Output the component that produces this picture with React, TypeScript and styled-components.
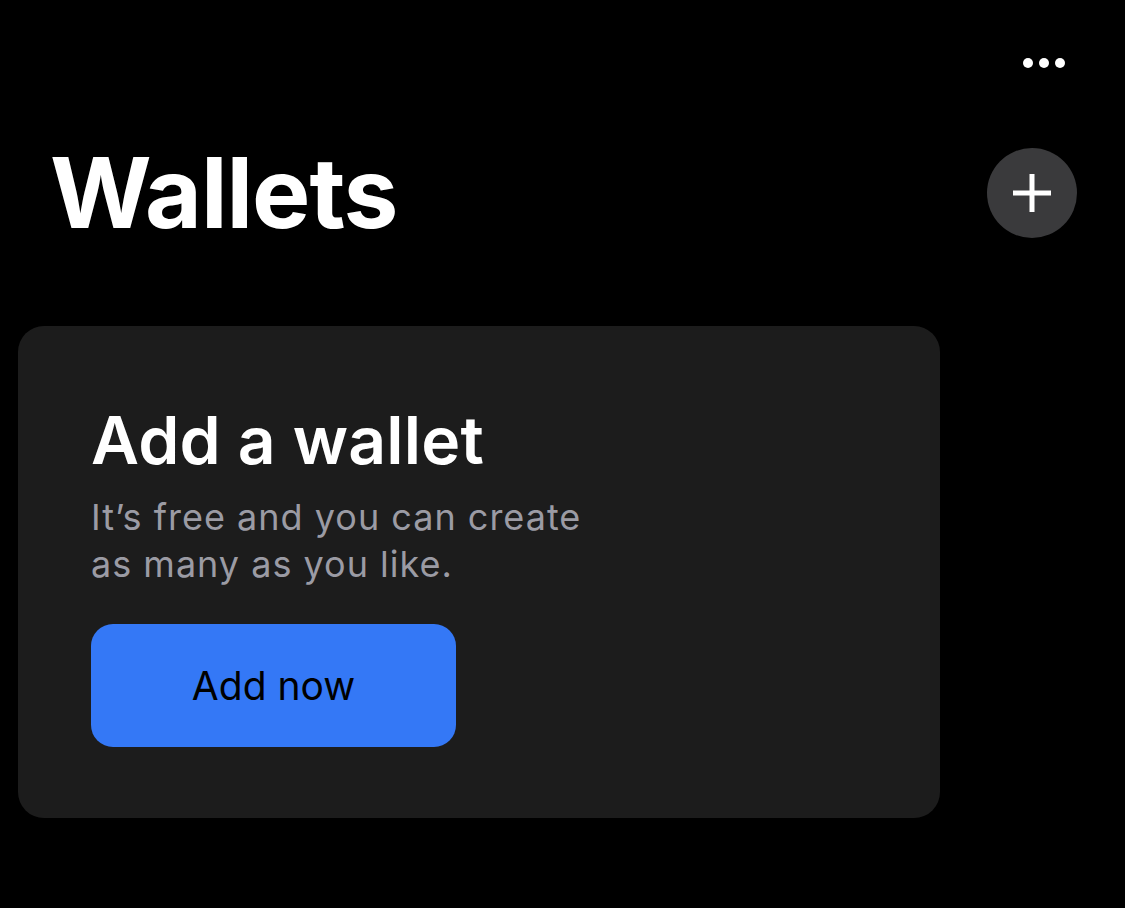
import React from "react";
import styled, { createGlobalStyle } from "styled-components";

const Global = createGlobalStyle`
  html, body { margin: 0; padding: 0; background: #000; }
  body { font-family: Inter, "Noto Sans", sans-serif; color: #fff; }
`;

const Page = styled.div`
  width: 1125px;
  height: 908px;
  background: #000;
  display: flex;
  flex-direction: column;
  overflow: hidden;
`;

const TopBar = styled.div`
  display: flex;
  justify-content: flex-end;
  align-items: center;
  height: 126px;
  padding-right: 60px;
  box-sizing: border-box;
`;

const MoreButton = styled.div`
  display: flex;
  gap: 6px;
  align-items: center;
`;

const Dot = styled.span`
  width: 10px;
  height: 10px;
  border-radius: 50%;
  background: #fff;
`;

const Header = styled.div`
  display: flex;
  justify-content: space-between;
  align-items: center;
  padding: 0 48px 0 50px;
  height: 134px;
`;

const Title = styled.h1`
  margin: 0;
  font-size: 98px;
  font-weight: 700;
  letter-spacing: -1px;
  line-height: 1;
`;

const AddCircle = styled.div`
  width: 90px;
  height: 90px;
  border-radius: 50%;
  background: #3a3a3c;
  display: flex;
  align-items: center;
  justify-content: center;
`;

const Card = styled.div`
  margin: 66px 0 0 18px;
  width: 922px;
  height: 492px;
  border-radius: 26px;
  background: #1c1c1c;
  box-sizing: border-box;
  padding: 74px 0 0 73px;
  display: flex;
  flex-direction: column;
  align-items: flex-start;
`;

const CardTitle = styled.h2`
  margin: 0;
  font-size: 66px;
  font-weight: 600;
  line-height: 80px;
  letter-spacing: 0.2px;
`;

const CardText = styled.p`
  margin: 14px 0 0 0;
  font-size: 36px;
  font-weight: 400;
  line-height: 47px;
  letter-spacing: 1px;
  color: #9b9ba4;
`;

const PrimaryButton = styled.button`
  margin-top: 36px;
  width: 365px;
  height: 123px;
  border: none;
  border-radius: 22px;
  background: #3478f6;
  color: #000;
  font-family: Inter, "Noto Sans", sans-serif;
  font-size: 39px;
  font-weight: 400;
  display: flex;
  align-items: center;
  justify-content: center;
`;

export default function App() {
  return (
    <>
      <Global />
      <Page>
        <TopBar>
          <MoreButton>
            <Dot />
            <Dot />
            <Dot />
          </MoreButton>
        </TopBar>
        <Header>
          <Title>Wallets</Title>
          <AddCircle>
            <svg width="40" height="40" viewBox="0 0 40 40">
              <path d="M20 1v38M1 20h38" stroke="#fff" strokeWidth="5" />
            </svg>
          </AddCircle>
        </Header>
        <Card>
          <CardTitle>Add a wallet</CardTitle>
          <CardText>
            It’s free and you can create
            <br />
            as many as you like.
          </CardText>
          <PrimaryButton>Add now</PrimaryButton>
        </Card>
      </Page>
    </>
  );
}
